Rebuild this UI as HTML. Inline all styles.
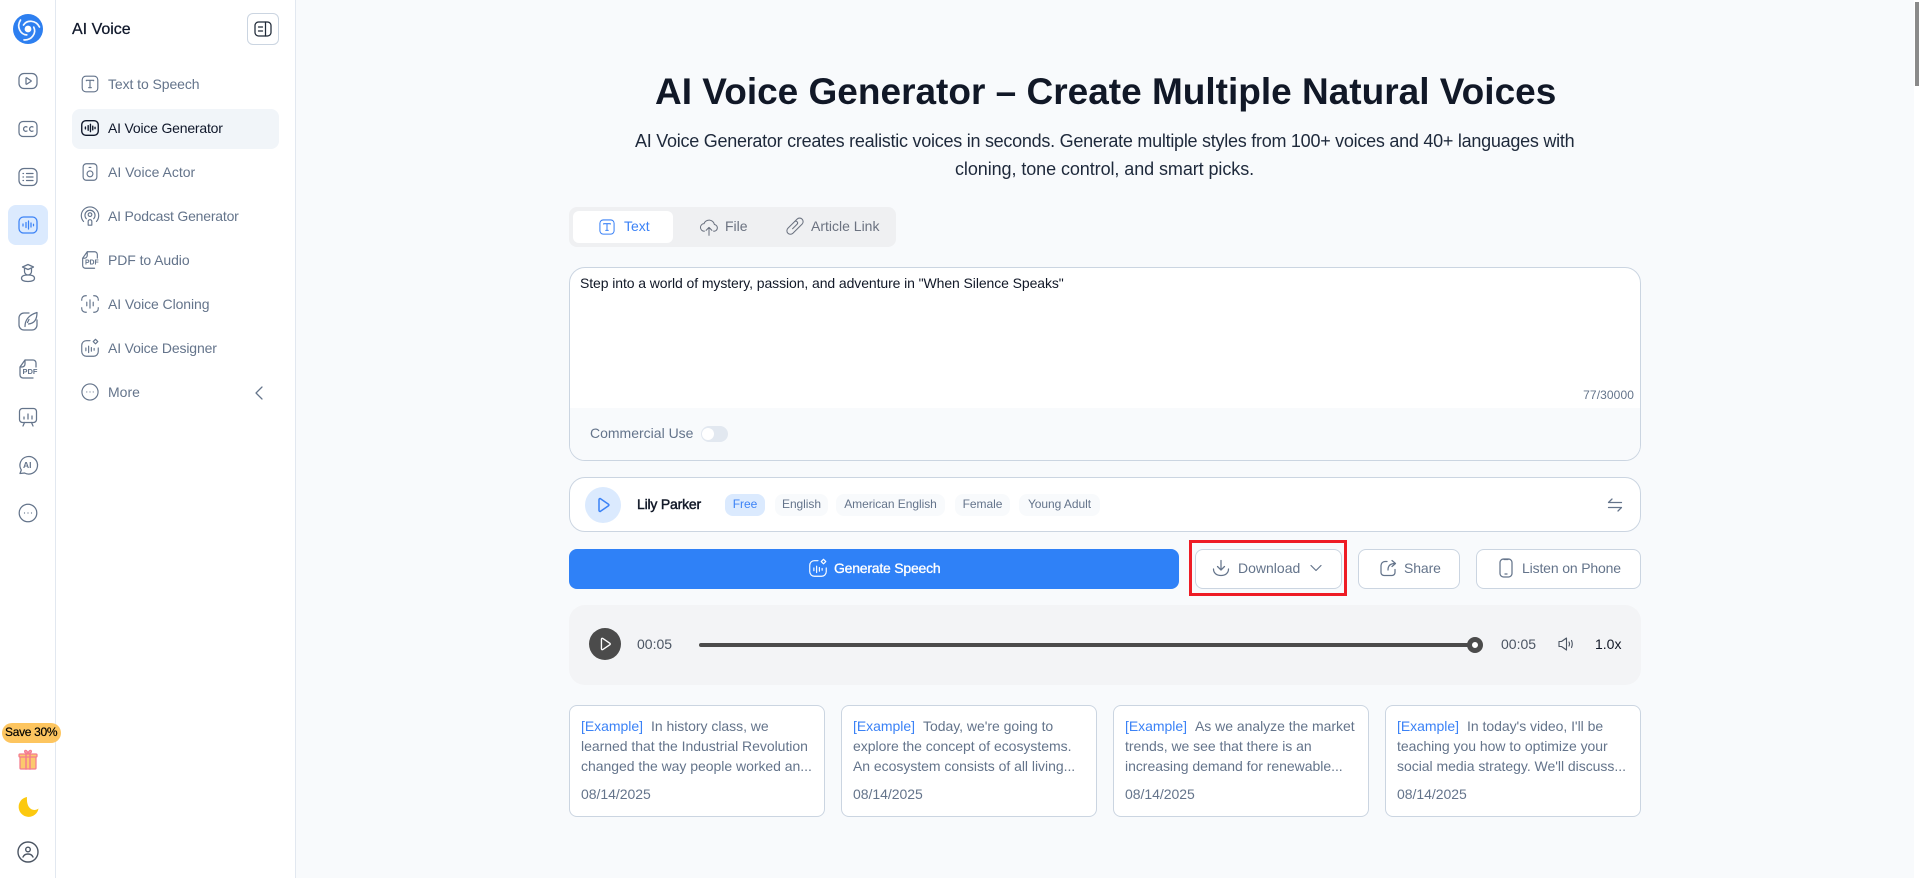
<!DOCTYPE html>
<html lang="en"><head><meta charset="utf-8"><title>AI Voice Generator</title>
<style>
*{box-sizing:border-box}
html,body{margin:0;padding:0;width:1920px;height:878px;overflow:hidden;background:#f8fafc;font-family:"Liberation Sans",sans-serif}
.a{position:absolute}
.t{position:absolute;white-space:nowrap;line-height:20px;font-size:14px;color:#64748b}
svg{position:absolute;fill:none;stroke:#64748b;stroke-width:1.25;stroke-linecap:round;stroke-linejoin:round;overflow:visible}
svg text{stroke:none;font-family:"Liberation Sans",sans-serif;font-weight:700}
.btn{position:absolute;top:549px;height:40px;background:#fff;border:1px solid #cbd5e1;border-radius:8px}
.tag{position:absolute;top:494px;height:22px;background:#f8fafc;border-radius:8px;font-size:12px;line-height:21px;text-align:center;color:#64748b;letter-spacing:-.05px}
.card{position:absolute;top:705px;width:256px;height:112px;background:#fff;border:1px solid #cbd5e1;border-radius:8px}
.card div{position:absolute;left:11px;white-space:nowrap;font-size:14px;line-height:20px;color:#64748b;letter-spacing:-.03px}
.card b{font-weight:400;color:#3b82f6;margin-right:8px}
</style></head><body>
<svg width="0" height="0" style="position:absolute"><defs>
<symbol id="wave" viewBox="0 0 24 24"><rect x="3" y="4" width="18" height="16" rx="4.500"/><path d="M7 11v2M10 9.500v5M12.500 8v8M15 10v4M17.500 11.300v1.400"/></symbol>
<symbol id="T" viewBox="0 0 24 24"><rect x="3.500" y="3.500" width="17" height="17" rx="4"/><path d="M8 8.500V8h8v.5M12 8v8M10.500 16h3"/></symbol>
<symbol id="more" viewBox="0 0 24 24"><circle cx="12" cy="12" r="8.800"/><path d="M8.500 12h.01M12 12h.01M15.500 12h.01"/></symbol>
<symbol id="pdf" viewBox="0 0 24 24"><path d="M9 3h8a3 3 0 0 1 3 3v4M4 10l5-7v4a3 3 0 0 1-3 3H4v8a3 3 0 0 0 3 3h10"/><text x="6.500" y="17" font-size="7.500" fill="#64748b">PDF</text></symbol>
<symbol id="star" viewBox="0 0 24 24"><path d="M12 4H8a5 5 0 0 0-5 5v7a5 5 0 0 0 5 5h8a5 5 0 0 0 5-5v-4"/><path d="M7.500 12v3M10.500 10v7M13.500 11.500v4M16.500 12.500v2"/><path d="M18 2.500l2.500 2.500-2.500 2.500-2.500-2.500z"/></symbol>
</defs></svg>

<div class="a" style="left:0;top:0;width:56px;height:878px;background:#fff;border-right:1px solid #e2e8f0"></div>
<div class="a" style="left:56px;top:0;width:240px;height:878px;background:#fff;border-right:1px solid #e2e8f0"></div>
<div class="a" style="left:1914px;top:0;width:6px;height:878px;background:#fff"></div>
<div class="a" style="left:1915px;top:2px;width:4px;height:84px;background:#8a8a8a"></div>

<svg style="left:13px;top:14px" width="30" height="30" viewBox="0 0 30 30"><circle cx="15" cy="15" r="15" fill="#2d7ff0" stroke="none"/><g stroke="#fff" stroke-width="1.700" stroke-opacity=".95"><path d="M10.500 11C14 5.500 23 6 26.500 13"/><path d="M10.500 11C14 5.500 23 6 26.500 13" transform="rotate(120 15 15)"/><path d="M10.500 11C14 5.500 23 6 26.500 13" transform="rotate(240 15 15)"/></g><circle cx="15" cy="15" r="3.400" fill="#fff" stroke="none"/></svg>

<svg style="left:16px;top:69px" width="24" height="24" viewBox="0 0 24 24"><rect x="3" y="4.500" width="18" height="15" rx="5"/><path d="M10 9.300v5.400a.5.5 0 0 0 .8.4l4.200-2.700a.5.5 0 0 0 0-.8l-4.200-2.700a.5.5 0 0 0-.8.4z"/></svg>
<svg style="left:16px;top:117px" width="24" height="24" viewBox="0 0 24 24"><rect x="3" y="4.500" width="18" height="15" rx="4"/><path d="M11 10a2.300 2.300 0 1 0 0 4M17 10a2.300 2.300 0 1 0 0 4"/></svg>
<svg style="left:16px;top:165px" width="24" height="24" viewBox="0 0 24 24"><rect x="3" y="3.500" width="18" height="17" rx="5"/><path d="M7 8.500h.5M7 12h.5M7 15.500h.5M10.500 8.500H17M10.500 12H17M10.500 15.500H17"/></svg>
<div class="a" style="left:8px;top:205px;width:40px;height:40px;background:#dbeafe;border-radius:8px"></div>
<svg style="left:16px;top:213px;stroke:#3b82f6" width="24" height="24"><use href="#wave"/></svg>
<svg style="left:16px;top:261px" width="24" height="24" viewBox="0 0 24 24"><path d="M6.500 6L12 3.500 17.500 6 12 8.500zM8.500 7.500v3a3.500 3.500 0 0 0 7 0v-3M12 14c-4 0-6.500 1.200-6.500 3.300s2.500 3.200 6.500 3.200 6.500-1.100 6.500-3.200S16 14 12 14z"/></svg>
<svg style="left:16px;top:309px" width="24" height="24" viewBox="0 0 24 24"><path d="M13 4H8a5 5 0 0 0-5 5v7a5 5 0 0 0 5 5h8a5 5 0 0 0 5-5v-5"/><path d="M9 17.500c0-6 3.500-11.500 12-14 0 7-3 11-8.500 11.500M13 10.500l-1.500 3"/></svg>
<svg style="left:16px;top:357px" width="24" height="24"><use href="#pdf"/></svg>
<svg style="left:16px;top:405px" width="24" height="24" viewBox="0 0 24 24"><rect x="3.500" y="3.500" width="17" height="14" rx="3"/><path d="M8 14v-2M12 14V9M16 14v-3M7 21l1.500-3.500M17 21l-1.500-3.500"/></svg>
<svg style="left:16px;top:453px" width="24" height="24" viewBox="0 0 24 24"><path d="M4 20.500l1.300-3.500A8.800 8.800 0 1 1 8.500 20z"/><text x="7" y="15" font-size="8.500" fill="#64748b">AI</text></svg>
<svg style="left:16px;top:501px" width="24" height="24"><use href="#more"/></svg>

<div class="a" style="left:2px;top:723px;width:59px;height:20px;background:#fdc55f;border-radius:10px"></div>
<div class="t" style="left:5px;top:722px;font-size:12px;color:#000;letter-spacing:-.3px;-webkit-text-stroke:.2px #000">Save 30%</div>
<svg style="left:18px;top:749px;stroke:#f47c8e" width="20" height="21" viewBox="0 0 20 21"><rect x="2" y="7" width="16" height="13" rx="1" fill="#fbc96d"/><rect x="1" y="5" width="18" height="3" rx="1" fill="#fbc96d"/><path d="M8 5v15M12 5v15" stroke-width="1.500"/><path d="M10 5C7 4 6 3 7 1.500c1.500-.5 3 1.500 3 3.500 0-2 1.500-4 3-3.500 1 1.500 0 2.500-3 3.500z" fill="#f9a5b5"/></svg>
<svg style="left:18px;top:797px" width="21" height="21" viewBox="0 0 21 21"><path d="M9 0A10 10 0 1 0 20.500 11.500C16 15 8 12.500 9 0z" fill="#fcc90f" stroke="none"/></svg>
<svg style="left:17px;top:841px;stroke:#4b5563;stroke-width:1.400" width="22" height="22" viewBox="0 0 22 22"><circle cx="11" cy="11" r="10"/><circle cx="11" cy="8.500" r="2.300"/><path d="M6 16c1-2.300 2.800-3 5-3s4 .7 5 3"/></svg>

<div class="t" style="left:72px;top:19.500px;font-size:16px;color:#0f172a;-webkit-text-stroke:.25px #0f172a">AI Voice</div>
<div class="a" style="left:247px;top:13px;width:32px;height:32px;background:#fff;border:1px solid #cbd5e1;border-radius:6px"></div>
<svg style="left:253px;top:19px;stroke:#1f2937" width="20" height="20" viewBox="0 0 20 20"><rect x="2" y="3" width="16" height="14" rx="3.500"/><path d="M12.500 3v14M5.500 8h4M5.500 12h4"/></svg>

<svg style="left:79px;top:73px" width="22" height="22"><use href="#T"/></svg>
<div class="t" style="left:108px;top:74px;letter-spacing:-.08px">Text to Speech</div>
<div class="a" style="left:72px;top:109px;width:207px;height:40px;background:#f1f5f9;border-radius:8px"></div>
<svg style="left:79px;top:117px;stroke:#0f172a;stroke-width:1.500" width="22" height="22"><use href="#wave"/></svg>
<div class="t" style="left:108px;top:118px;color:#0f172a;letter-spacing:-.2px">AI Voice Generator</div>
<svg style="left:79px;top:161px" width="22" height="22" viewBox="0 0 24 24"><rect x="4.500" y="3" width="15" height="18" rx="3.500"/><circle cx="12" cy="14" r="3.200"/><path d="M11 7h2"/></svg>
<div class="t" style="left:108px;top:162px">AI Voice Actor</div>
<svg style="left:79px;top:205px" width="22" height="22" viewBox="0 0 24 24"><path d="M5 18a9.500 9.500 0 1 1 14 0M8 15a5.500 5.500 0 1 1 8 0"/><circle cx="12" cy="10.500" r="2"/><path d="M10 22v-4a2 2 0 0 1 4 0v4z"/></svg>
<div class="t" style="left:108px;top:206px;letter-spacing:-.2px">AI Podcast Generator</div>
<svg style="left:79px;top:249px" width="22" height="22"><use href="#pdf"/></svg>
<div class="t" style="left:108px;top:250px;letter-spacing:-.08px">PDF to Audio</div>
<svg style="left:79px;top:293px" width="22" height="22" viewBox="0 0 24 24"><path d="M3 8V7a4 4 0 0 1 4-4h1M16 3h1a4 4 0 0 1 4 4v1M21 16v1a4 4 0 0 1-4 4h-1M8 21H7a4 4 0 0 1-4-4v-1M8.500 10v4M12 7.500v9M15.500 10v4"/></svg>
<div class="t" style="left:108px;top:294px;letter-spacing:-.08px">AI Voice Cloning</div>
<svg style="left:79px;top:337px" width="22" height="22"><use href="#star"/></svg>
<div class="t" style="left:108px;top:338px;letter-spacing:-.15px">AI Voice Designer</div>
<svg style="left:79px;top:381px" width="22" height="22"><use href="#more"/></svg>
<div class="t" style="left:108px;top:382px">More</div>
<svg style="left:253px;top:386px" width="12" height="14" viewBox="0 0 12 14"><path d="M9 1L3 7l6 6"/></svg>

<div class="t" style="left:655px;top:72px;font-size:37px;line-height:40px;font-weight:700;color:#111827">AI Voice Generator – Create Multiple Natural Voices</div>
<div class="t" style="left:635px;top:127px;font-size:18px;line-height:28px;color:#1e293b;letter-spacing:-.26px">AI Voice Generator creates realistic voices in seconds. Generate multiple styles from 100+ voices and 40+ languages with</div>
<div class="t" style="left:955px;top:155px;font-size:18px;line-height:28px;color:#1e293b;letter-spacing:-.08px">cloning, tone control, and smart picks.</div>

<div class="a" style="left:569px;top:207px;width:327px;height:40px;background:#eff0f2;border-radius:8px"></div>
<div class="a" style="left:573px;top:211px;width:100px;height:32px;background:#fff;border-radius:6px"></div>
<svg style="left:597px;top:217px;stroke:#3b82f6" width="20" height="20"><use href="#T"/></svg>
<div class="t" style="left:624px;top:216px;color:#3b82f6">Text</div>
<svg style="left:699px;top:217px;stroke:#6b7280" width="20" height="20" viewBox="0 0 24 24"><path d="M6.500 17a4.500 4.500 0 0 1-.5-9 6.500 6.500 0 0 1 12.500 1 4 4 0 0 1-1 8M12 22v-9M8.500 16l3.500-3.500 3.500 3.500"/></svg>
<div class="t" style="left:725px;top:216px;color:#6b7280">File</div>
<svg style="left:785px;top:217px;stroke:#6b7280" width="20" height="20" viewBox="0 0 24 24"><path d="M9.500 7.500l5-5a4.200 4.200 0 0 1 6 6l-11 11a4.200 4.200 0 0 1-6-6l8-8a2.200 2.200 0 0 1 3.100 3.100l-5.500 5.500"/></svg>
<div class="t" style="left:811px;top:216px;color:#6b7280">Article Link</div>

<div class="a" style="left:569px;top:267px;width:1072px;height:194px;background:#fff;border:1px solid #cbd5e1;border-radius:16px;overflow:hidden"><div class="a" style="left:0;top:140px;width:1070px;height:52px;background:#f8fafc"></div></div>
<div class="t" style="left:580px;top:272.500px;color:#111827;letter-spacing:-.09px">Step into a world of mystery, passion, and adventure in "When Silence Speaks"</div>
<div class="t" style="right:286px;top:385px;font-size:12px;color:#64748b;letter-spacing:.1px">77/30000</div>
<div class="t" style="left:590px;top:423px">Commercial Use</div>
<div class="a" style="left:701px;top:426px;width:27px;height:16px;background:#e2e8f0;border-radius:8px"></div>
<div class="a" style="left:702px;top:428px;width:12px;height:12px;background:#fff;border-radius:50%"></div>

<div class="a" style="left:569px;top:477px;width:1072px;height:55px;background:#fff;border:1px solid #cbd5e1;border-radius:16px"></div>
<div class="a" style="left:585px;top:487px;width:36px;height:36px;background:#dbeafe;border-radius:50%"></div>
<svg style="left:594px;top:496px;stroke:#3b82f6;stroke-width:1.500" width="18" height="18" viewBox="0 0 18 18"><path d="M5 3.500v11a1 1 0 0 0 1.500.8l8-5.500a1 1 0 0 0 0-1.600l-8-5.500A1 1 0 0 0 5 3.500z"/></svg>
<div class="t" style="left:637px;top:493.500px;color:#111827;letter-spacing:-.2px;-webkit-text-stroke:.45px #111827">Lily Parker</div>
<div class="tag" style="left:725px;width:40px;background:#dbeafe;color:#3b82f6">Free</div>
<div class="tag" style="left:775px;width:53px">English</div>
<div class="tag" style="left:836px;width:109px">American English</div>
<div class="tag" style="left:955px;width:55px">Female</div>
<div class="tag" style="left:1019px;width:81px">Young Adult</div>
<svg style="left:1607px;top:497px" width="16" height="16" viewBox="0 0 16 16"><path d="M14.500 5.500h-13l3.500-3.500M1.500 10.500h13l-3.500 3.500"/></svg>

<div class="a" style="left:569px;top:549px;width:610px;height:40px;background:#2f81f7;border-radius:8px"></div>
<svg style="left:807px;top:557px;stroke:#fff" width="22" height="22"><use href="#star"/></svg>
<div class="t" style="left:834px;top:558px;color:#fff;letter-spacing:-.22px;-webkit-text-stroke:.3px #fff">Generate Speech</div>

<div class="a" style="left:1189px;top:540px;width:158px;height:56px;border:3px solid #ee1c25"></div>
<div class="btn" style="left:1195px;width:147px"></div>
<svg style="left:1212px;top:559px" width="18" height="18" viewBox="0 0 18 18"><path d="M9 1.500v9M5.500 7.500L9 11l3.500-3.500M1.500 10c0 4 3 6.500 7.500 6.500s7.500-2.500 7.500-6.500"/></svg>
<div class="t" style="left:1238px;top:558px">Download</div>
<svg style="left:1310px;top:564px;stroke-width:1.200" width="12" height="8" viewBox="0 0 12 8"><path d="M1 1.500l5 5 5-5"/></svg>
<div class="btn" style="left:1358px;width:102px"></div>
<svg style="left:1379px;top:559px" width="18" height="18" viewBox="0 0 18 18"><path d="M8 2.500H6A4 4 0 0 0 2 6.500v7a3 3 0 0 0 3 3h8a3 3 0 0 0 3-3v-3M9 11c0-4 2-6.500 7-6.500M13 1.500l3.500 3L13 7.500"/></svg>
<div class="t" style="left:1404px;top:558px;letter-spacing:-.1px">Share</div>
<div class="btn" style="left:1476px;width:165px"></div>
<svg style="left:1497px;top:558px" width="18" height="20" viewBox="0 0 18 20"><rect x="3" y="1" width="12" height="18" rx="3.500"/><path d="M7 1.500h4M8 16h2"/></svg>
<div class="t" style="left:1522px;top:558px;letter-spacing:-.15px">Listen on Phone</div>

<div class="a" style="left:569px;top:605px;width:1072px;height:80px;background:#f3f4f6;border-radius:16px"></div>
<div class="a" style="left:589px;top:628px;width:32px;height:32px;background:#4b4b4b;border-radius:50%"></div>
<svg style="left:597px;top:636px;stroke:#fff;stroke-width:1.500" width="16" height="16" viewBox="0 0 18 18"><path d="M5 3.500v11a1 1 0 0 0 1.500.8l8-5.500a1 1 0 0 0 0-1.600l-8-5.500A1 1 0 0 0 5 3.500z"/></svg>
<div class="t" style="left:637px;top:634px;color:#4b5563">00:05</div>
<div class="a" style="left:699px;top:643px;width:776px;height:4px;background:#4b4b4b;border-radius:2px"></div>
<div class="a" style="left:1467px;top:637px;width:16px;height:16px;background:#fff;border:5px solid #4b4b4b;border-radius:50%"></div>
<div class="t" style="left:1501px;top:634px;color:#4b5563">00:05</div>
<svg style="left:1558px;top:636px;stroke:#4b5563;stroke-width:1.100" width="16" height="16" viewBox="0 0 16 16"><path d="M1 5.500v5h2.500L8.500 14V2L3.500 5.500zM11 6c.7 1.300.7 2.700 0 4M13.500 4.500c1 2.300 1 4.700 0 7"/></svg>
<div class="t" style="left:1595px;top:634px;color:#111827">1.0x</div>

<div class="card" style="left:569px"><div style="top:10px"><b>[Example]</b>In history class, we</div><div style="top:30px">learned that the Industrial Revolution</div><div style="top:50px">changed the way people worked an...</div><div style="top:78px">08/14/2025</div></div>
<div class="card" style="left:841px"><div style="top:10px"><b>[Example]</b>Today, we're going to</div><div style="top:30px">explore the concept of ecosystems.</div><div style="top:50px">An ecosystem consists of all living...</div><div style="top:78px">08/14/2025</div></div>
<div class="card" style="left:1113px"><div style="top:10px"><b>[Example]</b>As we analyze the market</div><div style="top:30px">trends, we see that there is an</div><div style="top:50px">increasing demand for renewable...</div><div style="top:78px">08/14/2025</div></div>
<div class="card" style="left:1385px"><div style="top:10px"><b>[Example]</b>In today's video, I'll be</div><div style="top:30px">teaching you how to optimize your</div><div style="top:50px">social media strategy. We'll discuss...</div><div style="top:78px">08/14/2025</div></div>
</body></html>
